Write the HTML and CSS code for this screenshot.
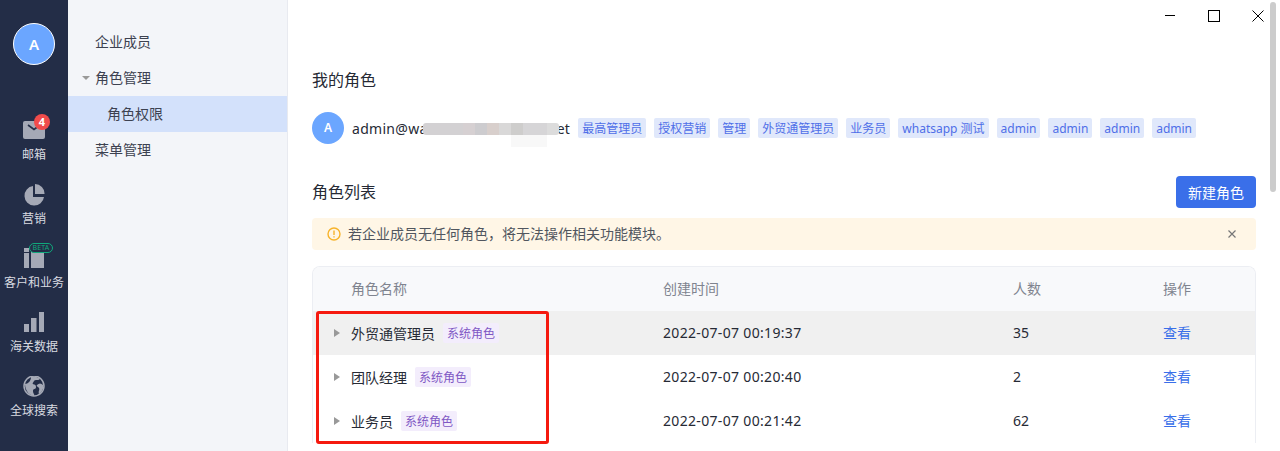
FILE: index.html
```html
<!DOCTYPE html>
<html lang="zh-CN">
<head>
    <meta charset="UTF-8">
    <title>角色权限</title>
    <link rel="stylesheet" href="styles.css">
</head>
<body>

    <!-- Left rail -->
    <nav class="rail">
        <div class="rail-avatar">A</div>

        <a class="rail-item">
            <span class="rail-icon">
                <svg width="24" height="22" viewBox="0 0 24 22"><rect x="1" y="1" width="22" height="18" rx="2" fill="#a5a9b6"/><path d="M6 5l6 4.500L18 5" fill="none" stroke="#232d47" stroke-width="1.600"/></svg>
                <span class="rail-badge">4</span>
            </span>
            <span>邮箱</span>
        </a>

        <a class="rail-item">
            <span class="rail-icon">
                <svg width="24" height="22" viewBox="0 0 24 22"><path d="M11 2a9.800 9.800 0 1 0 11 11H11z" fill="#a5a9b6"/><path d="M13 0a9.500 9.500 0 0 1 9.500 10H13z" fill="#a5a9b6"/></svg>
            </span>
            <span>营销</span>
        </a>

        <a class="rail-item">
            <span class="rail-icon">
                <svg width="24" height="22" viewBox="0 -2 24 22"><rect x="2" y="-2" width="5" height="4" fill="#a5a9b6"/><rect x="2" y="3" width="5" height="15" fill="#a5a9b6"/><rect x="9" y="-2" width="13" height="20" fill="#a5a9b6"/></svg>
                <span class="rail-beta">BETA</span>
            </span>
            <span>客户和业务</span>
        </a>

        <a class="rail-item">
            <span class="rail-icon">
                <svg width="24" height="22" viewBox="0 0 24 22"><rect x="2" y="12" width="5" height="8" fill="#a5a9b6"/><rect x="9" y="6" width="5.500" height="14" fill="#a5a9b6"/><rect x="17" y="0" width="5" height="20" fill="#a5a9b6"/></svg>
            </span>
            <span>海关数据</span>
        </a>

        <a class="rail-item">
            <span class="rail-icon">
                <svg width="24" height="22" viewBox="0 0 24 22"><circle cx="12" cy="10" r="10" fill="#232d47" stroke="#a5a9b6" stroke-width="1.500"/><path d="M3 8c3 0 6-3 6-7 3-1 7 0 9 2-2 2-5 0-6 2s-2 2-1 3 3 0 3 3-3 1-3 4 2 3 1 5c-4 0-9-5-9-12zM15 9c2-2 4-2 6 0 1 3-1 7-4 9-1-3 1-4 0-6s-3-1-2-3z" fill="#a5a9b6"/></svg>
            </span>
            <span>全球搜索</span>
        </a>
    </nav>

    <!-- Sub menu -->
    <aside class="submenu">
        <div class="submenu-item">企业成员</div>
        <div class="submenu-item"><i class="submenu-arrow"></i>角色管理</div>
        <div class="submenu-item submenu-child active">角色权限</div>
        <div class="submenu-item">菜单管理</div>
    </aside>

    <!-- Main content -->
    <main class="main">
        <h2 class="my-title">我的角色</h2>

        <div class="my-roles">
            <div class="user-avatar">A</div>
            <div class="user-mail">admin@wa<span class="mosaic"><i class="mosaic-under"></i></span>et</div>
            <div class="tags">
                <span class="tag">最高管理员</span>
                <span class="tag">授权营销</span>
                <span class="tag">管理</span>
                <span class="tag">外贸通管理员</span>
                <span class="tag">业务员</span>
                <span class="tag">whatsapp 测试</span>
                <span class="tag">admin</span>
                <span class="tag">admin</span>
                <span class="tag">admin</span>
                <span class="tag">admin</span>
            </div>
        </div>

        <div class="list-head">
            <h2>角色列表</h2>
            <button class="btn-new">新建角色</button>
        </div>

        <div class="alert">
            <svg width="14" height="14" viewBox="0 0 14 14"><circle cx="7" cy="7" r="6" fill="none" stroke="#f7b32b" stroke-width="1.400"/><path d="M7 3.500v4.500M7 9.300v1.300" stroke="#f7b32b" stroke-width="1.400"/></svg>
            <span class="alert-text">若企业成员无任何角色，将无法操作相关功能模块。</span>
            <svg class="alert-close" width="8" height="8" viewBox="0 0 8 8"><path d="M.5.5l7 7M7.500.5l-7 7" stroke="#777" stroke-width="1.200"/></svg>
        </div>

        <div class="table">
            <div class="row row-head">
                <span></span><span>角色名称</span><span>创建时间</span><span>人数</span><span>操作</span>
            </div>
            <div class="row row-hover">
                <i class="row-arrow"></i>
                <span class="role-name">外贸通管理员<em class="role-tag">系统角色</em></span>
                <span class="date">2022-07-07 00:19:37</span><span class="num">35</span><a class="link">查看</a>
            </div>
            <div class="row">
                <i class="row-arrow"></i>
                <span class="role-name">团队经理<em class="role-tag">系统角色</em></span>
                <span class="date">2022-07-07 00:20:40</span><span class="num">2</span><a class="link">查看</a>
            </div>
            <div class="row">
                <i class="row-arrow"></i>
                <span class="role-name">业务员<em class="role-tag">系统角色</em></span>
                <span class="date">2022-07-07 00:21:42</span><span class="num">62</span><a class="link">查看</a>
            </div>
        </div>

        <!-- Annotation box drawn on top of the table -->
        <div class="mark-box"></div>

        <!-- Window buttons -->
        <div class="win-btns">
            <svg width="12" height="12" viewBox="0 0 12 12"><path d="M1 5.500h10" stroke="#000" stroke-width="1"/></svg>
            <svg width="12" height="12" viewBox="0 0 12 12"><rect x=".5" y=".5" width="11" height="11" fill="none" stroke="#000"/></svg>
            <svg width="12" height="12" viewBox="0 0 12 12"><path d="M.5.5l11 11M11.500.5l-11 11" stroke="#000" stroke-width="1"/></svg>
        </div>

        <div class="scroll-thumb"></div>
    </main>

</body>
</html>
```

FILE: styles.css
```css
* {
    box-sizing: border-box;
}

html,
body {
    margin: 0;
    height: 451px;
    overflow: hidden;
}

body {
    display: flex;
    font-family: "Noto Sans", "Noto Sans CJK SC", sans-serif;
    font-size: 14px;
    color: #262a35;
    background-color: #fff;
}

/* Left rail */
.rail {
    width: 68px;
    flex-shrink: 0;
    padding-top: 23px;
    background-color: #232d47;
    display: flex;
    flex-direction: column;
    align-items: center;
}

.rail-avatar {
    width: 42px;
    height: 42px;
    margin-bottom: 55px;
    border: 1px solid #fff;
    border-radius: 50%;
    background-color: #6ba6ff;
    color: #fff;
    font-size: 15px;
    font-weight: 600;
    display: flex;
    align-items: center;
    justify-content: center;
}

.rail-item {
    height: 64px;
    display: flex;
    flex-direction: column;
    align-items: center;
    font-size: 12px;
    line-height: 18px;
    white-space: nowrap;
    color: #d9dbe1;
}

.rail-icon {
    position: relative;
    width: 24px;
    height: 22px;
    margin-bottom: 4px;
}

.rail-icon svg {
    display: block;
}

.rail-badge {
    position: absolute;
    top: -6px;
    left: 12px;
    width: 16px;
    height: 16px;
    border-radius: 50%;
    background-color: #f04b4b;
    color: #fff;
    font-size: 11px;
    font-weight: 700;
    line-height: 16px;
    text-align: center;
}

.rail-beta {
    position: absolute;
    top: -5px;
    left: 7px;
    width: 24px;
    height: 10px;
    border: 1px solid #10a87c;
    border-radius: 5px;
    background-color: #232d47;
    color: #10a87c;
    font-size: 7px;
    line-height: 8px;
    letter-spacing: .2px;
    text-align: center;
}

/* Sub menu */
.submenu {
    width: 220px;
    flex-shrink: 0;
    padding-top: 24px;
    border-right: 1px solid #e8eaf0;
    background-color: #f3f5f9;
}

.submenu-item {
    position: relative;
    height: 36px;
    padding-left: 27px;
    line-height: 36px;
    font-size: 14px;
    color: #3c4150;
}

.submenu-child {
    padding-left: 39px;
}

.active {
    background-color: #d3e1fb;
}

.submenu-arrow {
    position: absolute;
    left: 14px;
    top: 16px;
    border-style: solid;
    border-width: 4px 4px 0;
    border-color: #999 transparent transparent;
}

/* Main content */
.main {
    position: relative;
    flex: 1;
    padding: 69px 24px 0;
}

h2 {
    margin: 0;
    font-size: 16px;
    font-weight: 400;
    line-height: 22px;
}

.my-roles {
    display: flex;
    align-items: center;
    height: 32px;
    margin-top: 21px;
}

.user-avatar {
    width: 32px;
    height: 32px;
    margin-right: 8px;
    border-radius: 50%;
    background-color: #6ba6ff;
    color: #fff;
    font-size: 12px;
    font-weight: 600;
    line-height: 32px;
    text-align: center;
}

.user-mail {
    margin-right: 8px;
    white-space: nowrap;
    letter-spacing: .3px;
}

.mosaic {
    position: relative;
    display: inline-block;
    width: 136px;
    height: 12px;
    margin: 0 -2px -1px -5px;
    border-radius: 3px;
    background: linear-gradient(90deg, #d3d1d3 0 40px, #d6d0d2 40px 52px, #cdcccf 52px 64px, #d8cfcc 64px 76px, #d9d8d8 76px 88px, #cecdcc 88px 100px, #d6d5d7 100px 124px, #dcdcdc 124px);
}

.mosaic-under {
    position: absolute;
    left: 88px;
    top: 12px;
    width: 36px;
    height: 12px;
    background-color: #f8f8f8;
}

.tags {
    display: flex;
    gap: 8px;
}

.tag {
    height: 20px;
    padding: 0 4px;
    border-radius: 2px;
    background-color: #e0e8fb;
    color: #4f6fe8;
    font-size: 12px;
    line-height: 21px;
    white-space: nowrap;
}

.list-head {
    display: flex;
    align-items: center;
    justify-content: space-between;
    height: 32px;
    margin-top: 32px;
}

.btn-new {
    width: 80px;
    height: 32px;
    border: none;
    border-radius: 4px;
    background-color: #3a6fe9;
    color: #fff;
    font-family: inherit;
    font-size: 14px;
}

.alert {
    display: flex;
    align-items: center;
    height: 32px;
    margin-top: 10px;
    padding: 0 20px 0 15px;
    border-radius: 4px;
    background-color: #fff6e6;
    color: #51565f;
}

.alert-text {
    flex: 1;
    margin-left: 7px;
    padding-bottom: 2px;
}

/* Role table */
.table {
    margin-top: 16px;
    border: 1px solid #eceef3;
    border-bottom: none;
    border-radius: 8px 8px 0 0;
    overflow: hidden;
}

.row {
    display: grid;
    grid-template-columns: 38px 312px 350px 150px 1fr;
    align-items: center;
    height: 44px;
}

.row-head {
    background-color: #f8f9fb;
    color: #80848f;
}

.row-head span {
    padding-bottom: 2px;
}

.row-hover {
    background-color: #f0f0f0;
}

.row-arrow {
    margin-left: 21px;
    width: 0;
    border-style: solid;
    border-width: 4px 0 4px 6px;
    border-color: transparent transparent transparent #999;
}

.role-name {
    display: flex;
    align-items: center;
}

.role-tag {
    height: 20px;
    margin-left: 8px;
    padding: 0 4px;
    border-radius: 2px;
    background-color: #f3edfc;
    color: #8058c4;
    font-size: 12px;
    font-style: normal;
    line-height: 21px;
}

.date {
    padding-bottom: 2px;
    letter-spacing: .33px;
}

.num {
    padding-bottom: 2px;
}

.link {
    padding-bottom: 2px;
    color: #3a6fe9;
}

/* Things lying over the page */
.mark-box {
    position: absolute;
    left: 28px;
    top: 311px;
    width: 233px;
    height: 133px;
    border: 3px solid #f5190f;
    border-radius: 3px;
}

.win-btns {
    position: absolute;
    top: 10px;
    left: 876px;
    display: flex;
    gap: 32px;
}

.scroll-thumb {
    position: absolute;
    top: 2px;
    left: 982px;
    width: 6px;
    height: 190px;
    border-radius: 3px;
    background-color: #ccc;
}
```
